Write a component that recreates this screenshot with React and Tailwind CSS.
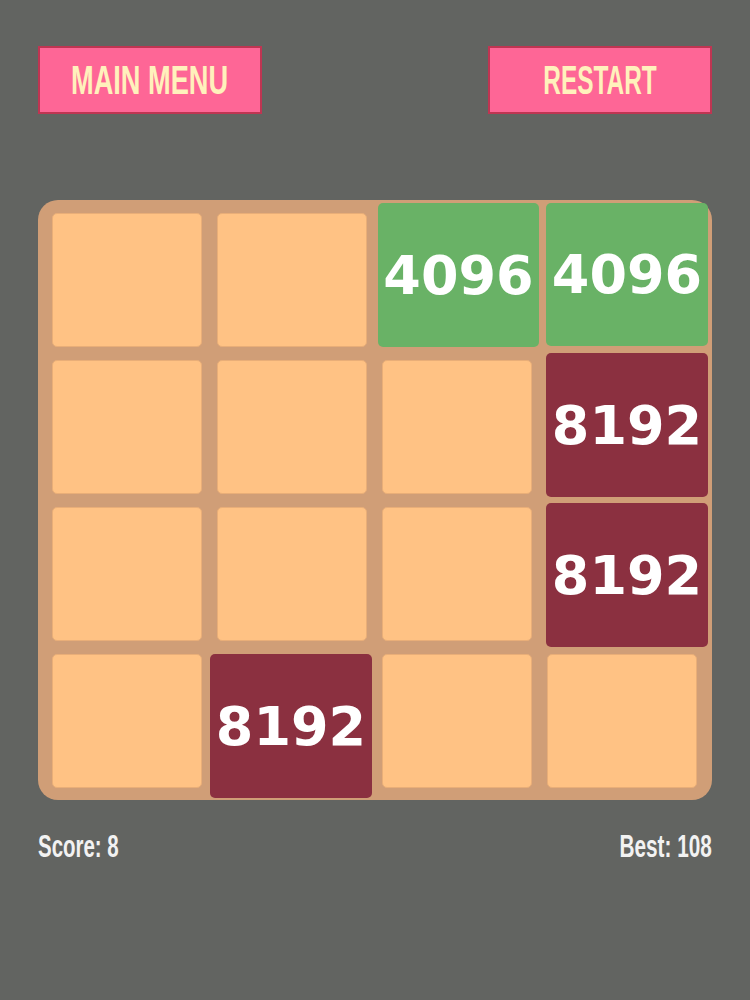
import React from "react";

const cells = [
  // row 1
  { v: null }, { v: null },
  { v: "4096", cls: "bg-[#69b266] -ml-[4px] -mt-[10px] w-[161px] h-[144px]" },
  { v: "4096", cls: "bg-[#69b266] -ml-[1px] -mt-[10px] w-[162px] h-[143px]" },
  // row 2
  { v: null }, { v: null }, { v: null },
  { v: "8192", cls: "bg-[#8b3040] -ml-[1px] -mt-[7px] w-[162px] h-[144px]" },
  // row 3
  { v: null }, { v: null }, { v: null },
  { v: "8192", cls: "bg-[#8b3040] -ml-[1px] -mt-[4px] w-[162px] h-[144px]" },
  // row 4
  { v: null },
  { v: "8192", cls: "bg-[#8b3040] -ml-[7px] mt-0 w-[162px] h-[144px]" },
  { v: null }, { v: null },
];

function Button({ children, scale }) {
  return (
    <button className="w-[224px] h-[68px] bg-[#fe6696] border-2 border-[#bf3552] flex items-center justify-center overflow-hidden">
      <span
        className={`inline-block whitespace-nowrap text-[40px] leading-none font-bold text-[#fff1bc] ${scale}`}
        style={{ fontFamily: '"Liberation Sans", Arial, sans-serif' }}
      >
        {children}
      </span>
    </button>
  );
}

export default function App() {
  return (
    <div className="w-[750px] h-[1000px] bg-[#626461] px-[38px] pt-[46px]">
      <div className="flex justify-between">
        <Button scale="scale-x-[0.68]">MAIN MENU</Button>
        <Button scale="scale-x-[0.61]">RESTART</Button>
      </div>

      <div className="mt-[86px] w-[674px] h-[600px] bg-[#d09e77] rounded-[20px] px-[14px] py-[13px]">
        <div className="grid grid-cols-[150px_150px_150px_150px] grid-rows-[134px_134px_134px_134px] gap-x-[15px] gap-y-[13px]">
          {cells.map((c, i) => (
            <div key={i} className="relative">
              {c.v ? (
                <div
                  className={`relative z-10 rounded-[5px] flex items-center justify-center text-white text-[54px] font-bold ${c.cls}`}
                  style={{ fontFamily: '"DejaVu Sans", Verdana, sans-serif' }}
                >
                  {c.v}
                </div>
              ) : (
                <div className="w-full h-full rounded-[5px] bg-[#ffc284] border border-[#e9ae78]" />
              )}
            </div>
          ))}
        </div>
      </div>

      <div
        className="mt-[31px] flex justify-between text-[31px] leading-[32px] font-bold text-[#f2f2f2]"
        style={{ fontFamily: '"Liberation Sans", Arial, sans-serif' }}
      >
        <span className="inline-block whitespace-nowrap origin-left scale-x-[0.66]">Score: 8</span>
        <span className="inline-block whitespace-nowrap origin-right scale-x-[0.67]">Best: 108</span>
      </div>
    </div>
  );
}
